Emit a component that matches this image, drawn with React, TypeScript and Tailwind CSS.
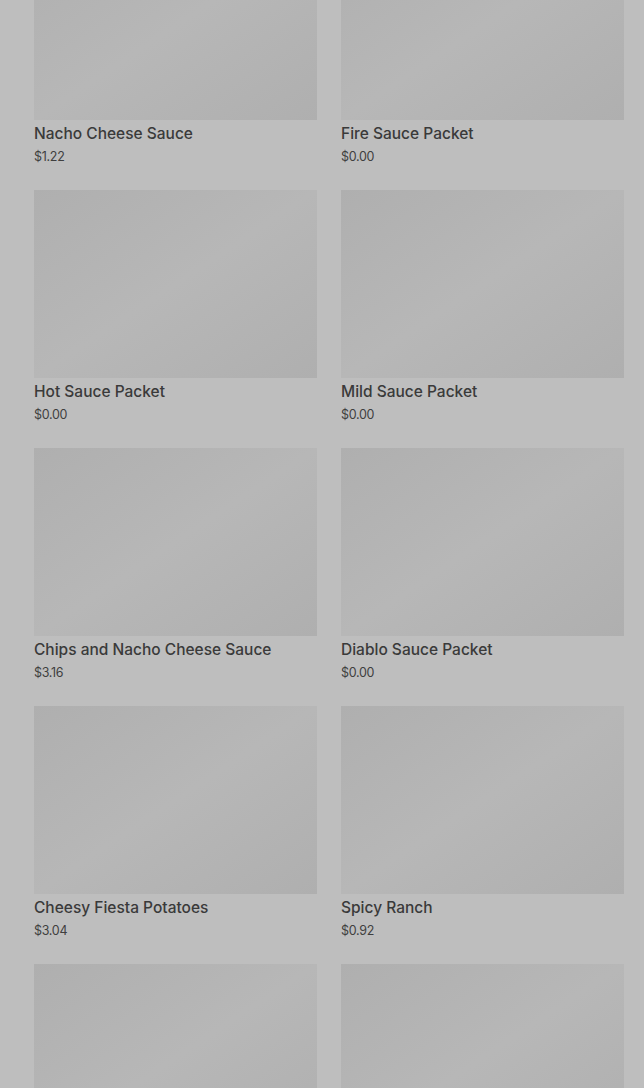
import React from "react";

const items = [
  { name: "Nacho Cheese Sauce", price: "$1.22" },
  { name: "Fire Sauce Packet", price: "$0.00" },
  { name: "Hot Sauce Packet", price: "$0.00" },
  { name: "Mild Sauce Packet", price: "$0.00" },
  { name: "Chips and Nacho Cheese Sauce", price: "$3.16" },
  { name: "Diablo Sauce Packet", price: "$0.00" },
  { name: "Cheesy Fiesta Potatoes", price: "$3.04" },
  { name: "Spicy Ranch", price: "$0.92" },
  { name: "", price: "" },
  { name: "", price: "" },
];

export default function App() {
  return (
    <div
      className="h-[1088px] w-full overflow-hidden bg-[#bebebe]"
      style={{ fontFamily: "Inter, 'Noto Sans', sans-serif" }}
    >
      <div className="mt-[-68px] grid grid-cols-2 gap-x-6 gap-y-[23px] pl-[34px] pr-[20px]">
        {items.map((it, i) => (
          <div key={i} className="flex flex-col">
            <div className="h-[188px] w-full bg-gradient-to-br from-[#afafaf] via-[#b7b7b7] to-[#afafaf]" />
            <div className="mt-[2px] h-6 text-[15.5px] leading-6 font-medium text-[#3a3a3a]">{it.name}</div>
            <div className="mt-[1px] h-5 text-[12.5px] leading-5 tracking-[-0.3px] text-[#3f3f3f]">{it.price}</div>
          </div>
        ))}
      </div>
    </div>
  );
}
